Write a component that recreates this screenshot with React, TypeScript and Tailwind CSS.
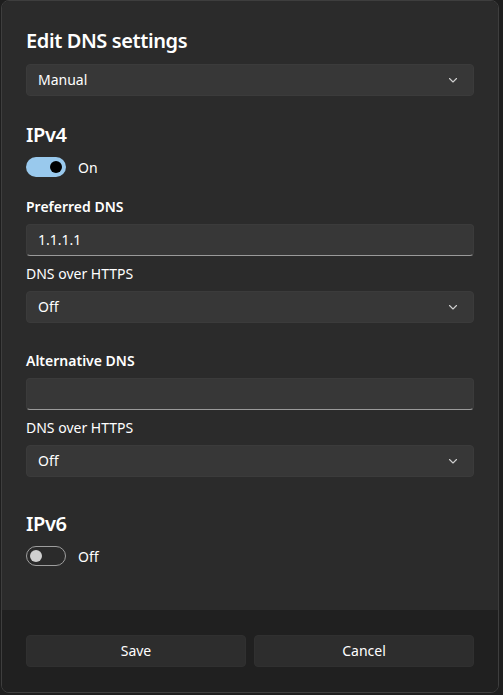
import React from "react";

const Chevron = () => (
  <svg width="10" height="6" viewBox="0 0 10 6" fill="none" className="text-[#cfcfcf]">
    <path d="M1.5 1.5l3.5 3.5 3.5-3.5" stroke="currentColor" strokeWidth="1.1" strokeLinecap="round" strokeLinejoin="round" />
  </svg>
);

const Select = ({ value }: { value: string }) => (
  <div className="h-8 flex items-center justify-between rounded-[4px] bg-[#373737] border border-[#3b3b3b] pl-[11px] pr-[15px] text-sm text-white">
    <span>{value}</span>
    <Chevron />
  </div>
);

const TextInput = ({ value }: { value: string }) => (
  <div className="h-8 flex items-center rounded-[4px] bg-[#373737] border border-[#3b3b3b] border-b-[#9a9a9a] pl-[11px] text-sm text-white">
    {value}
  </div>
);

const Toggle = ({ on }: { on: boolean }) => (
  <div className="flex items-center gap-3 h-5">
    {on ? (
      <div className="w-10 h-5 rounded-full bg-[#99c9ed] flex items-center justify-end pr-[4px]">
        <div className="w-3 h-3 rounded-full bg-black" />
      </div>
    ) : (
      <div className="w-10 h-5 rounded-full border border-[#9e9e9e] flex items-center pl-[3px]">
        <div className="w-3 h-3 rounded-full bg-[#d0d0d0]" />
      </div>
    )}
    <span className="text-sm text-white pt-[1px]">{on ? "On" : "Off"}</span>
  </div>
);

export default function App() {
  return (
    <div
      className="w-[503px] h-[695px] bg-[#1e1e1e] pl-[1px]"
      style={{ fontFamily: '"Noto Sans", "Open Sans", sans-serif' }}
    >
      <div className="w-[498px] h-[693px] border border-[#3e3e3e] rounded-lg overflow-hidden flex flex-col">
        <div className="flex-1 bg-[#2b2b2b] px-6 pt-[26px]">
          <h1 className="text-[20px] leading-7 font-semibold tracking-[-0.4px] text-white">Edit DNS settings</h1>
          <div className="mt-[9px]">
            <Select value="Manual" />
          </div>
          <h2 className="mt-[25px] text-[20px] leading-7 font-semibold tracking-[-0.4px] text-white">IPv4</h2>
          <div className="mt-2">
            <Toggle on />
          </div>
          <div className="mt-5 text-sm leading-5 font-semibold text-white">Preferred DNS</div>
          <div className="mt-[7px]">
            <TextInput value="1.1.1.1" />
          </div>
          <div className="mt-2 text-sm leading-5 text-white">DNS over HTTPS</div>
          <div className="mt-[7px]">
            <Select value="Off" />
          </div>
          <div className="mt-7 text-sm leading-5 font-semibold text-white">Alternative DNS</div>
          <div className="mt-[7px]">
            <TextInput value="" />
          </div>
          <div className="mt-2 text-sm leading-5 text-white">DNS over HTTPS</div>
          <div className="mt-[7px]">
            <Select value="Off" />
          </div>
          <h2 className="mt-[33px] text-[20px] leading-7 font-semibold tracking-[-0.4px] text-white">IPv6</h2>
          <div className="mt-2">
            <Toggle on={false} />
          </div>
        </div>
        <div className="h-[82px] bg-[#202020] px-6 pt-[25px] grid grid-cols-2 gap-2">
          <button className="h-8 rounded-[4px] bg-[#2d2d2d] border border-[#303030] text-sm text-white">
            Save
          </button>
          <button className="h-8 rounded-[4px] bg-[#2d2d2d] border border-[#303030] text-sm text-white">
            Cancel
          </button>
        </div>
      </div>
    </div>
  );
}
